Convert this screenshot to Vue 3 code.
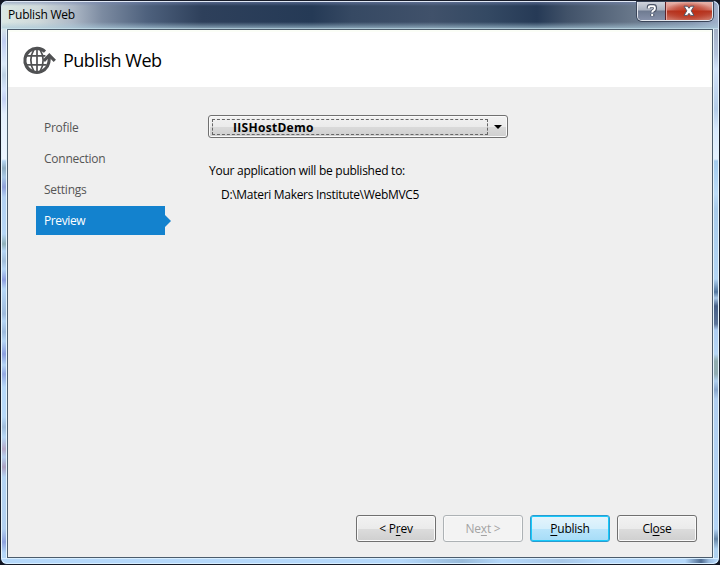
<script setup>
const steps = ['Profile', 'Connection', 'Settings', 'Preview']
const active = 'Preview'
const buttons = [
  { id: 'prev', before: '< P', key: 'r', after: 'ev' },
  { id: 'next', before: 'Ne', key: 'x', after: 't >' },
  { id: 'publish', before: '', key: 'P', after: 'ublish' },
  { id: 'close', before: 'Cl', key: 'o', after: 'se' },
]
</script>

<template>
  <div class="desktop">
    <div class="window">
      <div class="titlebar">
        <span class="caption">Publish Web</span>
        <div class="controls">
          <div class="help">
            <svg width="12" height="14" viewBox="0 0 12 14">
              <path d="M2.8 4.4V3.2Q2.8 2 4.2 2H7.6Q9 2 9 3.4V4.8Q9 6 7.8 6.5Q6.3 7.1 6.3 8.5M6.3 10V12.2" fill="none" stroke="#4b5467" stroke-width="4" />
              <path d="M2.8 4.4V3.4Q2.8 2.3 4.2 2.3H7.4Q8.8 2.3 8.8 3.6V4.7Q8.8 5.8 7.6 6.3Q6.2 6.9 6.2 8.6M6.2 10V12" fill="none" stroke="#fff" stroke-width="2" />
            </svg>
          </div>
          <div class="shut">
            <svg width="14" height="12" viewBox="0 0 14 12">
              <path d="M2 1.2H5.4L7 3.3L8.6 1.2H12L9.2 5.8L12 10.4H8.6L7 8.3L5.4 10.4H2L4.8 5.8Z" fill="#fff" stroke="#535666" stroke-width="1" />
            </svg>
          </div>
        </div>
      </div>
      <div class="middle">
        <div class="edge left"></div>
        <div class="client">
          <header class="header">
            <svg class="globe" width="34" height="30" viewBox="0 0 34 30" fill="none" stroke="#505153">
              <path d="M23 6.6A12 12 0 1 0 19.2 26.6Q27.3 23 27.3 13.5V11" stroke-width="3.1" />
              <path d="M15 4V27M5 10.8H23.4M3.4 19.8H24.6" stroke-width="1.7" />
              <path d="M12 4.4Q5.6 15.3 12 26.6M18 4.4Q24.4 15.3 18 26.6" stroke-width="1.7" />
              <path d="M21.8 15.8L27.3 10.2L32.8 15.8" stroke-width="3.2" />
            </svg>
            <h1>Publish Web</h1>
          </header>
          <div class="body">
            <nav>
              <div v-for="s in steps" :key="s" class="step" :class="{ active: s === active }"><span>{{ s }}</span></div>
            </nav>
            <main>
              <div class="combo">
                <div class="focus"><span>IISHostDemo</span></div>
                <i class="arrow"></i>
              </div>
              <p class="lead">Your application will be published to:</p>
              <p class="path">D:\Materi Makers Institute\WebMVC5</p>
            </main>
          </div>
          <footer>
            <button v-for="b in buttons" :key="b.id" :class="b.id" :disabled="b.id === 'next'"><span>{{ b.before }}<u>{{ b.key }}</u>{{ b.after }}</span></button>
          </footer>
        </div>
        <div class="edge right"></div>
      </div>
      <div class="bottom"></div>
    </div>
  </div>
</template>

<style>
body { margin: 0; overflow: hidden; }
</style>

<style scoped>
* { box-sizing: border-box; }
.desktop { width: 720px; height: 565px; background: #111522; font: 12px/16px "Open Sans", "Noto Sans", sans-serif; color: #000; }
.window {
  width: 720px; height: 565px; border: 1px solid #171c29; border-radius: 7px; overflow: hidden;
  display: flex; flex-direction: column; background: #b5d5f5;
}
.titlebar {
  height: 28px; flex: none; display: flex; justify-content: space-between; padding-left: 6px;
  border-top: 1px solid #e0e8f5; border-left: 1px solid #d7e6ee; border-right: 1px solid #d5e2f5; border-radius: 6px 6px 0 0;
  background:
    linear-gradient(180deg, #7888b488 0, #6c7fa600 4px, #a9c8d800 20px, #a9c8d8aa 26px, #d5f0f8 27px),
    linear-gradient(90deg, #dbe8e4 0, #cfd9da 36px, #aeb9c7 70px, #7c8ba1 100px, #4e617d 145px, #2e405b 200px, #253a56 310px, #364963 350px, #40516a 430px, #344963 485px, #263a56 535px, #415269 565px, #68778a 630px, #8293ad 690px, #a2b2cc 718px);
}
.caption { font-size: 12px; line-height: 26px; letter-spacing: -.22px; }
.controls { display: flex; height: 19px; margin-right: 5px; border: 1px solid #e3e6ed; border-top: 0; border-radius: 0 0 5px 5px; overflow: hidden; box-shadow: 0 0 0 1px #3a4559; }
.controls > div { display: flex; align-items: center; justify-content: center; }
.help { width: 28px; border-right: 1px solid #5b2227; background: linear-gradient(#d0d4dd 0, #a9b1bf 8px, #6f7b91 9px, #8590a9 18px); }
.shut { width: 46px; background: radial-gradient(ellipse at 50% 55%, #bf2c10 0, #b7311c88 45%, #0000 75%), linear-gradient(#e8b5ac 0, #d47d70 8px, #b33420 9px, #cf7868 18px); box-shadow: inset 1px 0 #e9a59e; }
.middle { flex: 1; display: flex; min-height: 0; }
.edge { width: 6px; flex: none; border: solid #e6f4fb; border-width: 0 1px; }
.left {
  background: linear-gradient(#d6e4e6 0, #bfceF1 12px, #dcebf8 35px, #bdd2e3 46px, #d5e4fb 60px, #c4d1f5 70px, #e4effd 85px, #edf5ff 130px, #b7d5f1 132px, #90adc2 139px, #a9c8e5 148px, #8fa1da 158px, #b3d1f2 168px, #b6d6f6 205px, #8fb0b9 215px, #b5d5f5 222px, #a2bedb 232px, #b7d7f7 240px, #8e9fe0 251px, #b7d8f8 260px, #9ebadc 285px, #b5d5f5 292px, #9dbadd 303px, #b5d5f5 312px, #8b9fdf 325px, #b4d5f6 336px, #94a9e2 345px, #b7d9f9 358px, #b7d9f9 388px, #a1bddb 398px, #b7d8f6 408px, #b6abc9 420px, #b5d0f0 428px, #aca1c2 438px, #b4d4f3 448px, #b2d0f0 500px, #8ea2de 513px, #b4d7f9 524px);
}
.right {
  background: linear-gradient(#a4b1c5 0, #b4c4dc 25px, #d3e4f9 40px, #b4cce8 80px, #d7e8fc 100px, #e5f1ff 130px, #a3cbed 132px, #bddcf8 165px, #a9cbea 180px, #b3d5f4 250px, #51759d 263px, #a8c7e6 269px, #466087 277px, #5c7498 295px, #aecdf0 301px, #b6d6f5 325px, #91adaf 332px, #91acb2 345px, #b0cfee 352px, #89a7cc 361px, #b1cff0 370px, #b4d4f5 500px, #6686a7 510px, #aed1f0 520px);
}
.client { flex: 1; border: 1px solid #4c5c6c; background: #efefef; display: flex; flex-direction: column; }
.header { height: 57px; flex: none; background: #fff; border: 2px solid #fbfef7; border-bottom: 0; display: flex; align-items: center; gap: 7px; padding-left: 12px; }
h1 { font-size: 18px; line-height: 24px; font-weight: 400; margin: 1px 0 0; letter-spacing: -.5px; }
.body { flex: 1; display: flex; padding: 26px 0 0 28px; gap: 43px; }
nav { width: 129px; display: flex; flex-direction: column; gap: 2px; }
.step { height: 29px; padding-left: 8px; color: #555; line-height: 29px; position: relative; letter-spacing: -.25px; }
.active { background: #1382ce; color: #fff; letter-spacing: -.4px; }
.active::after { content: ""; position: absolute; left: 100%; top: 9px; border: solid transparent; border-width: 6px 0 6px 6px; border-left-color: #1382ce; }
.combo { width: 300px; height: 23px; margin-top: 2px; border: 1px solid #707070; border-radius: 3px; box-shadow: inset 0 0 0 1px #fafafa; background: linear-gradient(#f2f2f2 0, #ebebeb 50%, #dadada 51%, #cfcfcf); display: flex; align-items: center; padding: 0 5px 0 3px; justify-content: space-between; }
.focus { width: 276px; height: 16px; border: 1px dashed #666; padding-left: 20px; font-weight: 700; line-height: 15px; letter-spacing: .3px; }
.arrow { border: solid transparent; border-width: 4px 4px 0; border-top-color: #000; }
p { margin: 0; white-space: pre; }
.lead { padding-left: 1px; margin-top: 25px; letter-spacing: -.26px; }
.path { padding-left: 13px; margin-top: 8px; letter-spacing: -.3px; }
footer { display: flex; justify-content: flex-end; gap: 7px; padding: 0 15px 15px 0; }
button { width: 80px; height: 27px; padding: 0; font: inherit; color: #000; border: 1px solid #707070; border-radius: 3px; box-shadow: inset 0 0 0 1px #fafafa; background: linear-gradient(#f2f2f2 0, #ebebeb 50%, #dcdcdc 51%, #cfcfcf); letter-spacing: -.25px; }
.next { color: #a3a3a3; border-color: #adb2b5; background: #f3f3f3; }
.publish { border-color: #2b9bd0; box-shadow: inset 0 0 0 1px #17cafa; background: linear-gradient(#e5f4fc 0, #d4effc 50%, #b9e5fb 51%, #a6dcf7); }
u { text-underline-offset: 2px; text-decoration-thickness: 1px; text-decoration-skip-ink: none; }
.bottom { height: 6px; flex: none; border: 1px solid #d8eeff; border-radius: 0 0 6px 6px; background: linear-gradient(90deg, #b5d8fa 0, #b5d8fa 400px, #98bad9 460px, #b5d8fa 500px, #a8c8e8 560px, #b5d8fa 600px, #b5d8fa 683px, #4f6c91 699px, #9dbde0 707px, #b5d8fa 715px); }
</style>
